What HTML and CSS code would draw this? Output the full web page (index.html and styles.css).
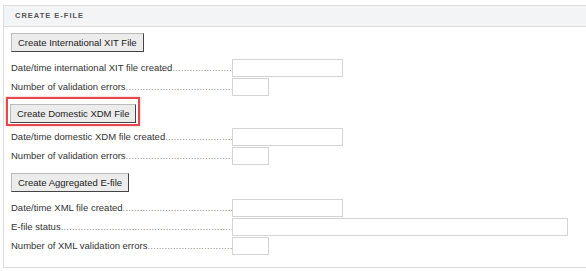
FILE: index.html
```html
<!DOCTYPE html>
<html>
    <head>
        <meta charset="UTF-8">
        <title>Create E-File</title>
        <link rel="stylesheet" href="styles.css">
    </head>
    <body>
        <div class="panel">
            <div class="panel_head">CREATE E-FILE</div>
            <div class="panel_body">
                <div class="grp">
                    <button class="btn">Create International XIT File</button>
                    <div class="row">
                        <span class="lbl">Date/time international XIT file created</span>
                        <input type="text" class="fld fld_md">
                    </div>
                    <div class="row">
                        <span class="lbl">Number of validation errors</span>
                        <input type="text" class="fld fld_sm">
                    </div>
                </div>
                <div class="grp">
                    <span class="hilite"><button class="btn">Create Domestic XDM File</button></span>
                    <div class="row">
                        <span class="lbl">Date/time domestic XDM file created</span>
                        <input type="text" class="fld fld_md">
                    </div>
                    <div class="row">
                        <span class="lbl">Number of validation errors</span>
                        <input type="text" class="fld fld_sm">
                    </div>
                </div>
                <div class="grp">
                    <button class="btn">Create Aggregated E-file</button>
                    <div class="row">
                        <span class="lbl">Date/time XML file created</span>
                        <input type="text" class="fld fld_md">
                    </div>
                    <div class="row">
                        <span class="lbl">E-file status</span>
                        <input type="text" class="fld fld_lg">
                    </div>
                    <div class="row">
                        <span class="lbl">Number of XML validation errors</span>
                        <input type="text" class="fld fld_sm">
                    </div>
                </div>
            </div>
        </div>
    </body>
</html>
```

FILE: styles.css
```css
body{
    margin: 0;
    background-color: white;
    font-family: "Liberation Sans", Arial, sans-serif;
    overflow: hidden;
}
.panel{
    margin: 5px -4px 0 3px;
    border: 1px solid #dcdcdc;
    border-right: none;
}
.panel_head{
    height: 20px;
    line-height: 20px;
    padding-left: 11px;
    background-color: #f3f4f6;
    border-bottom: 1px solid #dcdcdc;
    font-size: 7.5px;
    font-weight: bold;
    letter-spacing: 1px;
    color: #555;
}
.panel_body{
    padding: 6px 0 11px 7px;
}
.grp{
    display: flex;
    flex-direction: column;
    align-items: flex-start;
    margin-bottom: 7px;
}
.grp:last-child{
    margin-bottom: 0;
}
.btn{
    box-sizing: border-box;
    font-family: "Liberation Sans", Arial, sans-serif;
    font-size: 9.5px;
    color: #222;
    height: 19px;
    padding: 0 6px;
    margin: 0 0 7px 0;
    background-color: #ececec;
    border: 1px solid #bbb;
    border-right-color: #444;
    border-bottom-color: #444;
    border-radius: 0;
}
.hilite{
    display: inline-block;
    padding: 5px 2px 1px 2px;
    margin: -7px 0 2px -5px;
    border: 2px solid #e5484d;
    box-shadow: 0 0 2px rgba(229, 72, 77, 0.45);
}
.hilite .btn{
    margin: 0;
    display: block;
}
.row{
    display: flex;
    align-items: center;
    margin-bottom: 1px;
}
.lbl{
    width: 221px;
    overflow: hidden;
    white-space: nowrap;
    line-height: 18px;
    font-size: 9.5px;
    color: #333;
}
.lbl::after{
    content: "........................................................................................................";
    color: #888;
    letter-spacing: 0.2px;
}
.fld{
    box-sizing: border-box;
    height: 18px;
    margin: 0;
    border: 1px solid #d4d4d4;
    background: white;
}
.fld_md{
    width: 111px;
}
.fld_sm{
    width: 37px;
}
.fld_lg{
    width: 336px;
}
```
